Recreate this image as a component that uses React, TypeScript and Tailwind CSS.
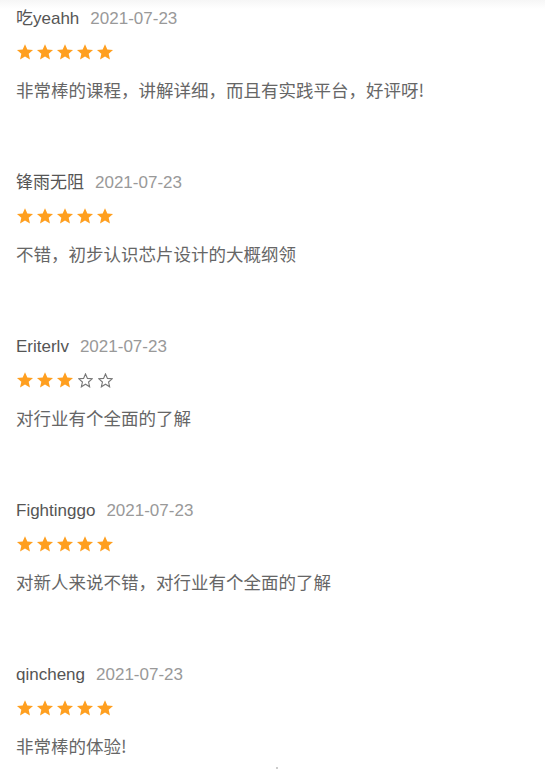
import React from "react";

const reviews = [
  { name: "吃yeahh", date: "2021-07-23", stars: 5, text: "非常棒的课程，讲解详细，而且有实践平台，好评呀!" },
  { name: "锋雨无阻", date: "2021-07-23", stars: 5, text: "不错，初步认识芯片设计的大概纲领" },
  { name: "Eriterlv", date: "2021-07-23", stars: 3, text: "对行业有个全面的了解" },
  { name: "Fightinggo", date: "2021-07-23", stars: 5, text: "对新人来说不错，对行业有个全面的了解" },
  { name: "qincheng", date: "2021-07-23", stars: 5, text: "非常棒的体验!" },
];

const STAR = "M12 1.5l3.1 7.1 7.6.7-5.8 5.1 1.7 7.6L12 18l-6.6 4 1.7-7.6L1.3 9.3l7.6-.7z";

function Star({ filled }: { filled: boolean }) {
  return (
    <div className="w-5 h-[18px] flex items-center justify-center">
      {filled ? (
        <svg width="18" height="18" viewBox="0 0 24 24">
          <path d={STAR} fill="#ff9f1f" />
        </svg>
      ) : (
        <svg width="15" height="15" viewBox="0 0 24 24">
          <path d={STAR} fill="none" stroke="#777" strokeWidth="1.8" strokeLinejoin="miter" />
        </svg>
      )}
    </div>
  );
}

export default function App() {
  return (
    <div
      className="w-[545px] h-[771px] bg-white overflow-hidden relative"
      style={{ fontFamily: '"Liberation Sans", Arial, "Noto Sans CJK SC", sans-serif' }}
    >
      <div className="absolute top-0 left-0 right-0 h-[9px] bg-gradient-to-b from-[#f6f6f6] to-white" />
      <div className="relative pt-[7px] pl-4">
        {reviews.map((r, i) => (
          <div key={i} className="mb-[69px]">
            <div className="h-6 flex items-center text-[17px] leading-6">
              <span className="text-[#555]">{r.name}</span>
              <span className="text-[#999] ml-[11px]">{r.date}</span>
            </div>
            <div className="mt-[12px] flex -ml-[1px]">
              {[0, 1, 2, 3, 4].map((k) => (
                <Star key={k} filled={k < r.stars} />
              ))}
            </div>
            <div
              className="mt-[17px] h-6 leading-6 text-[17.5px] text-[#666]"
              style={{ fontFamily: '"Noto Sans CJK SC", "Liberation Sans", sans-serif' }}
            >
              {r.text}
            </div>
          </div>
        ))}
      </div>
      <div className="absolute left-[276px] top-[767px] w-[2px] h-[2px] bg-[#ccc]" />
    </div>
  );
}
